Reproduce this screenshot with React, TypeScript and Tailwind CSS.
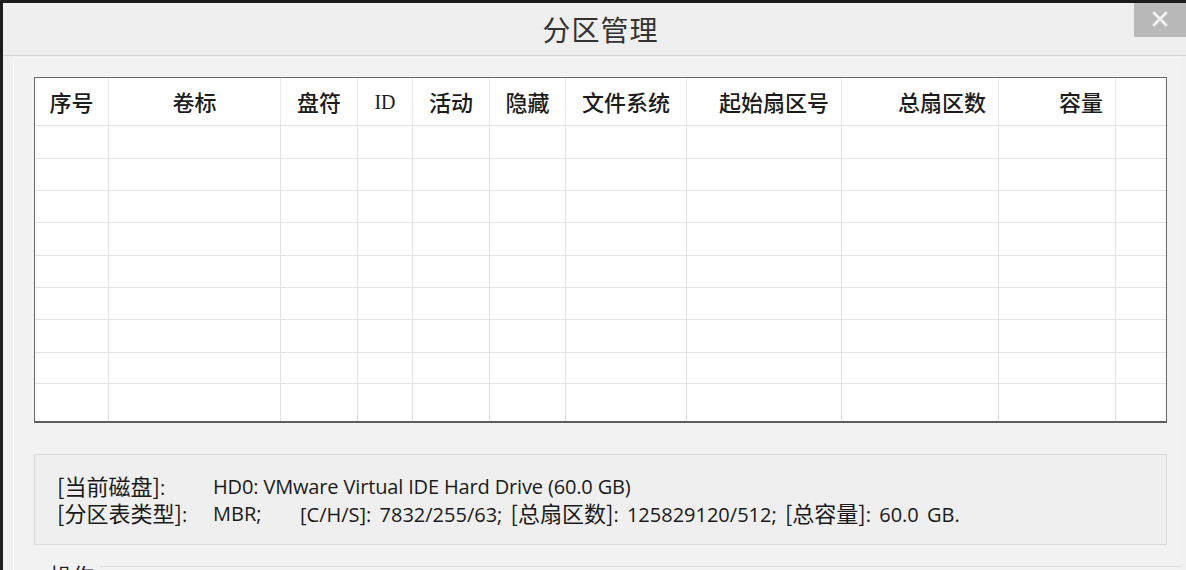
import React from 'react'

// 分区管理 dialog — partition table + current disk info

const columns: { label: string; width: number; align: 'center' | 'right'; serif?: boolean }[] = [
  { label: '序号', width: 74, align: 'center' },
  { label: '卷标', width: 172, align: 'center' },
  { label: '盘符', width: 77, align: 'center' },
  { label: 'ID', width: 55, align: 'center', serif: true },
  { label: '活动', width: 77, align: 'center' },
  { label: '隐藏', width: 76, align: 'center' },
  { label: '文件系统', width: 121, align: 'center' },
  { label: '起始扇区号', width: 155, align: 'right' },
  { label: '总扇区数', width: 157, align: 'right' },
  { label: '容量', width: 117, align: 'right' },
  { label: '', width: 50, align: 'center' },
]

const gridCols = 'grid grid-cols-[74px_172px_77px_55px_77px_76px_121px_155px_157px_117px_50px]'

// empty body rows, heights picked so the row lines land where the original has them
const rowHeights = [33, 32, 32, 33, 32, 32, 33, 31]

const cjk = '"Noto Sans CJK SC", "Noto Sans", sans-serif'

function Cjk({ children }: { children: React.ReactNode }) {
  return <span className="text-[22px] leading-[27px]" style={{ fontFamily: cjk }}>{children}</span>
}

function EmptyRow({ last, height }: { last?: boolean; height: number }) {
  return (
    <div
      className={`${gridCols} ${last ? '' : 'border-b border-[#e4e4e4]'}`}
      style={{ height }}
    >
      {columns.map((c, i) => (
        <div
          key={i}
          className={i === columns.length - 1 ? '' : 'border-r border-[#e2e2e2]'}
        />
      ))}
    </div>
  )
}

export default function App() {
  return (
    <div
      className="w-[1186px] h-[570px] overflow-hidden bg-[#f1f1f1] border-t-[3px] border-l-[3px] border-[#1d1d1d]"
      style={{ fontFamily: '"Open Sans", "Noto Sans CJK SC", sans-serif' }}
    >
      {/* Title bar */}
      <div className="relative h-[53px] flex items-center justify-center pl-[12px] bg-[#efefef] border-b border-[#d6d6d6]">
        <span className="text-[28px] text-[#333] tracking-[1px]" style={{ fontFamily: cjk }}>
          分区管理
        </span>
        <div className="absolute top-[-3px] right-0 w-[52px] h-[37px] bg-[#b9b9b9] flex items-center justify-center">
          <svg width="18" height="18" viewBox="0 0 18 18">
            <path d="M3 3 L15 15 M15 3 L3 15" stroke="#f2f2f2" strokeWidth="2.8" strokeLinecap="round" />
          </svg>
        </div>
      </div>

      {/* Body panel */}
      <div className="ml-[10px] mr-[4px] mt-[1px] h-[600px] border-l border-t border-[#fbfbfb] bg-[#f2f2f2] pl-[20px] pt-[19px]">
        {/* Partition table */}
        <div className="w-[1133px] border border-[#6a6a6a] border-b-2 border-b-[#5e5e5e] bg-white">
          <div className={`${gridCols} h-[48px] border-b border-[#e4e4e4]`}>
            {columns.map((c, i) => (
              <div
                key={i}
                className={`flex items-center ${c.align === 'right' ? 'justify-end pr-[12px]' : 'justify-center'} ${
                  i === columns.length - 1 ? '' : 'border-r border-[#e8e8e8]'
                } text-[#1c1c1c]`}
              >
                <span
                  className={c.serif ? 'text-[20px]' : 'text-[22px] font-medium'}
                  style={{ fontFamily: c.serif ? '"Liberation Serif", serif' : cjk }}
                >
                  {c.label}
                </span>
              </div>
            ))}
          </div>
          {rowHeights.map((h, i) => (
            <EmptyRow key={i} height={h} />
          ))}
          <EmptyRow last height={37} />
        </div>

        {/* Current disk info */}
        <div className="mt-[31px] w-[1133px] h-[91px] border border-[#d9d9d9] bg-[#efefef] pl-[22px] pt-[18px] text-[20px] text-[#1a1a1a] leading-[27px]">
          <div className="flex items-center h-[27px]">
            <span className="w-[156px]"><Cjk>[当前磁盘]</Cjk>:</span>
            <span className="tracking-[-0.15px]">HD0: VMware Virtual IDE Hard Drive (60.0 GB)</span>
          </div>
          <div className="flex items-center h-[27px]">
            <span className="w-[156px]"><Cjk>[分区表类型]</Cjk>:</span>
            <span className="w-[87px]">MBR;</span>
            <span className="[word-spacing:3px]">
              [C/H/S]: 7832/255/63; <Cjk>[总扇区数]</Cjk>: 125829120/512; <Cjk>[总容量]</Cjk>: 60.0 GB.
            </span>
          </div>
        </div>

        {/* Operations group */}
        <div className="mt-[18px] flex items-start">
          <span className="pl-[16px] text-[22px] text-[#222] leading-none" style={{ fontFamily: cjk }}>
            操作
          </span>
          <div className="flex-1 mt-[3px] ml-[6px] border-t border-[#dcdcdc]" />
        </div>
      </div>
    </div>
  )
}
